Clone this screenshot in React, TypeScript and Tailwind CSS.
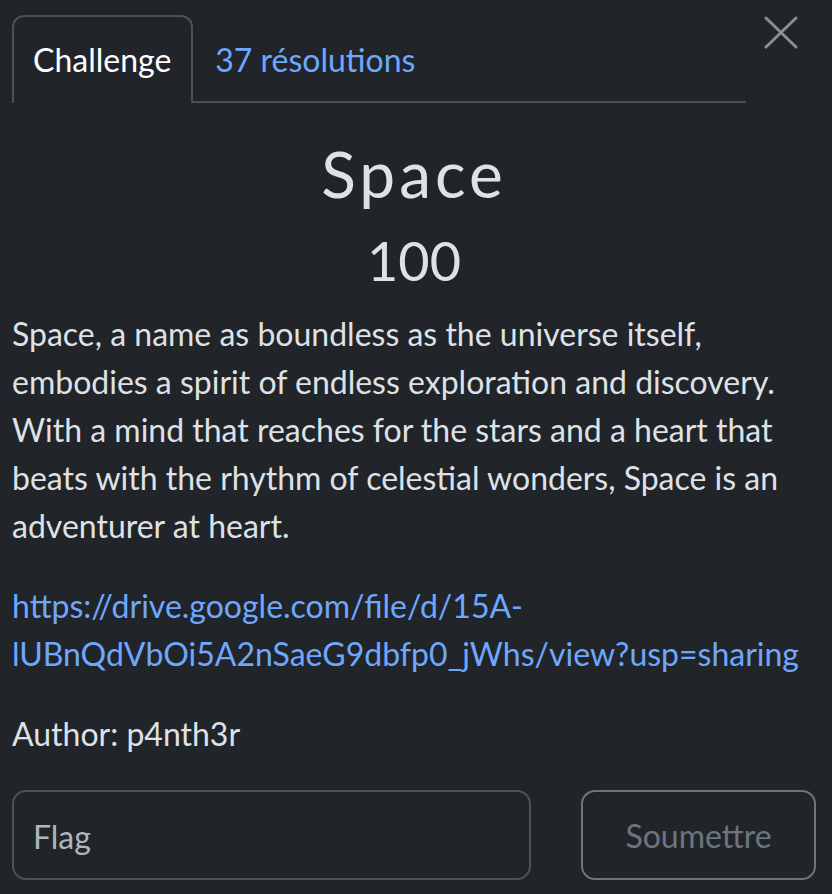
const DESCRIPTION =
  "Space, a name as boundless as the universe itself, embodies a spirit of endless exploration and discovery. With a mind that reaches for the stars and a heart that beats with the rhythm of celestial wonders, Space is an adventurer at heart.";

const LINK = "https://drive.google.com/file/d/15A-lUBnQdVbOi5A2nSaeG9dbfp0_jWhs/view?usp=sharing";

function CloseIcon() {
  return (
    <svg width="34" height="33" viewBox="0 0 34 33" className="block">
      <path d="M2 2 L32 31 M32 2 L2 31" stroke="#8b8e92" strokeWidth="3" strokeLinecap="round" />
    </svg>
  );
}

export default function App() {
  return (
    <div
      className="min-h-[894px] w-[832px] bg-[#212529] pl-[12px] pr-[16px] text-[#dee2e6]"
      style={{ fontFamily: "Lato, 'Noto Sans', sans-serif" }}
    >
      {/* Tabs + close */}
      <div className="flex items-start pt-[15px]">
        <ul className="flex flex-1 items-end border-b-2 border-[#495057]">
          <li className="-mb-[2px] rounded-t-[12px] border-2 border-b-0 border-[#495057] bg-[#212529] pl-[19px] pr-[20px] py-[19px] text-[32px] leading-[48px] text-white">
            Challenge
          </li>
          <li className="-mb-[2px] border-2 border-b-0 border-transparent px-[20px] py-[19px] text-[32px] leading-[48px] text-[#6ea8fe]">
            37 résolutions
          </li>
        </ul>
        <div className="flex w-[70px] justify-center pt-[1px]">
          <CloseIcon />
        </div>
      </div>

      {/* Title + value */}
      <div className="pt-[33px] text-center">
        <h2 className="text-[64px] leading-[1.2] font-normal tracking-[4px] text-[#dee2e6]">Space</h2>
        <h3 className="mt-[16px] text-[54px] leading-[1.2] font-normal text-[#dee2e6]">100</h3>
      </div>

      {/* Description */}
      <div className="mt-[16px] text-[32px] leading-[48px]">
        <p>{DESCRIPTION}</p>
        <p className="mt-[32px]">
          <a href={LINK} className="text-[#6ea8fe]">
            {LINK}
          </a>
        </p>
        <p className="mt-[32px]">Author: p4nth3r</p>
      </div>

      {/* Flag form */}
      <div className="mt-[32px] flex items-center justify-between">
        <input
          placeholder="Flag"
          className="h-[90px] w-[519px] rounded-[14px] border-2 border-[#4d5257] bg-[#212529] px-[19px] pt-[3px] text-[32px] text-[#dee2e6] outline-none placeholder:text-[#adb5bd]"
        />
        <button className="h-[90px] w-[235px] rounded-[14px] border-2 border-[#6c757d] bg-transparent pt-[3px] text-[32px] text-[#6c757d]">
          Soumettre
        </button>
      </div>
    </div>
  );
}
